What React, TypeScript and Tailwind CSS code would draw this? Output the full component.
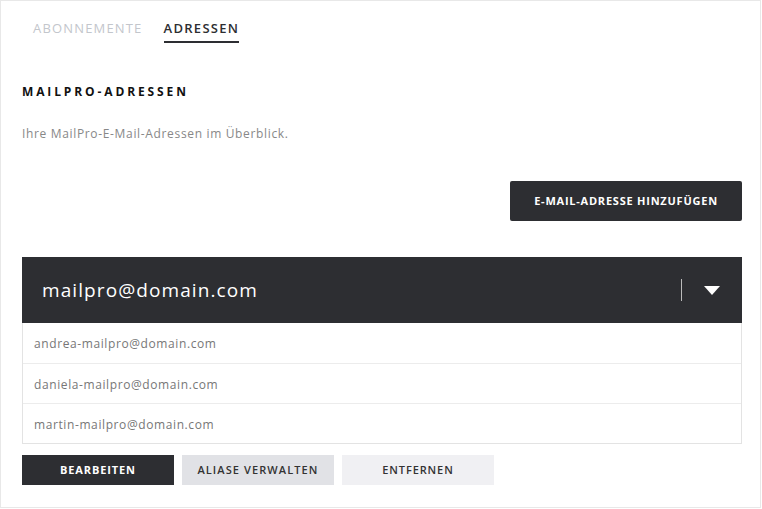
const aliases = [
  'andrea-mailpro@domain.com',
  'daniela-mailpro@domain.com',
  'martin-mailpro@domain.com',
];

export default function App() {
  return (
    <div
      className="w-[761px] h-[508px] bg-white border border-[#e8e8e8] text-[#222] overflow-hidden"
      style={{ fontFamily: '"Open Sans", "Liberation Sans", sans-serif' }}
    >
      <div className="ml-[21px] w-[720px]">
        {/* Tabs */}
        <div className="flex gap-[21px] pl-[11px] pt-[18px]">
          <div className="text-[13px] tracking-[0.09em] text-[#c3c6cc] leading-[18px]">ABONNEMENTE</div>
          <div className="flex flex-col">
            <div className="text-[13px] font-semibold tracking-[0.1em] text-[#2d2e32] leading-[18px]">ADRESSEN</div>
            <div className="h-[2px] bg-[#2d2e32] mt-[4px]" />
          </div>
        </div>

        {/* Heading */}
        <h2 className="mt-[41px] text-[12px] font-bold tracking-[0.24em] text-[#111] leading-[16px]">MAILPRO-ADRESSEN</h2>
        <p className="mt-[26px] text-[12px] text-[#888] tracking-[0.055em] leading-[16px]">Ihre MailPro-E-Mail-Adressen im Überblick.</p>

        <div className="flex justify-end mt-[39px]">
          <button className="w-[232px] h-[40px] bg-[#2d2e32] text-white text-[11px] font-bold tracking-[0.07em] rounded-[2px]">
            E-MAIL-ADRESSE HINZUFÜGEN
          </button>
        </div>

        {/* Address panel */}
        <div className="mt-[36px]">
          <div className="h-[66px] bg-[#2d2e32] flex items-center pl-[20px] pr-[22px]">
            <div className="flex-1 text-white text-[19px] tracking-[0.057em]">mailpro@domain.com</div>
            <div className="w-px h-[22px] bg-[#bbb]" />
            <svg width="16" height="9" viewBox="0 0 16 9" className="ml-[22px]">
              <path d="M0 0h16L8 9z" fill="#fff" />
            </svg>
          </div>
          <div className="border border-t-0 border-[#e3e3e3]">
            {aliases.map((a, i) => (
              <div
                key={a}
                className={`h-[40px] flex items-center pl-[11px] pt-[2px] text-[12px] tracking-[0.05em] text-[#777] ${i > 0 ? 'border-t border-[#ececec]' : ''}`}
              >
                {a}
              </div>
            ))}
          </div>
        </div>

        {/* Actions */}
        <div className="flex gap-[8px] mt-[11px]">
          <button className="w-[152px] h-[30px] bg-[#2d2e32] text-white text-[11px] font-bold tracking-[0.08em]">BEARBEITEN</button>
          <button className="w-[152px] h-[30px] bg-[#e1e2e6] text-[#333] text-[11px] font-semibold tracking-[0.1em]">ALIASE VERWALTEN</button>
          <button className="w-[152px] h-[30px] bg-[#f0f0f3] text-[#333] text-[11px] font-semibold tracking-[0.08em]">ENTFERNEN</button>
        </div>
      </div>
    </div>
  );
}
